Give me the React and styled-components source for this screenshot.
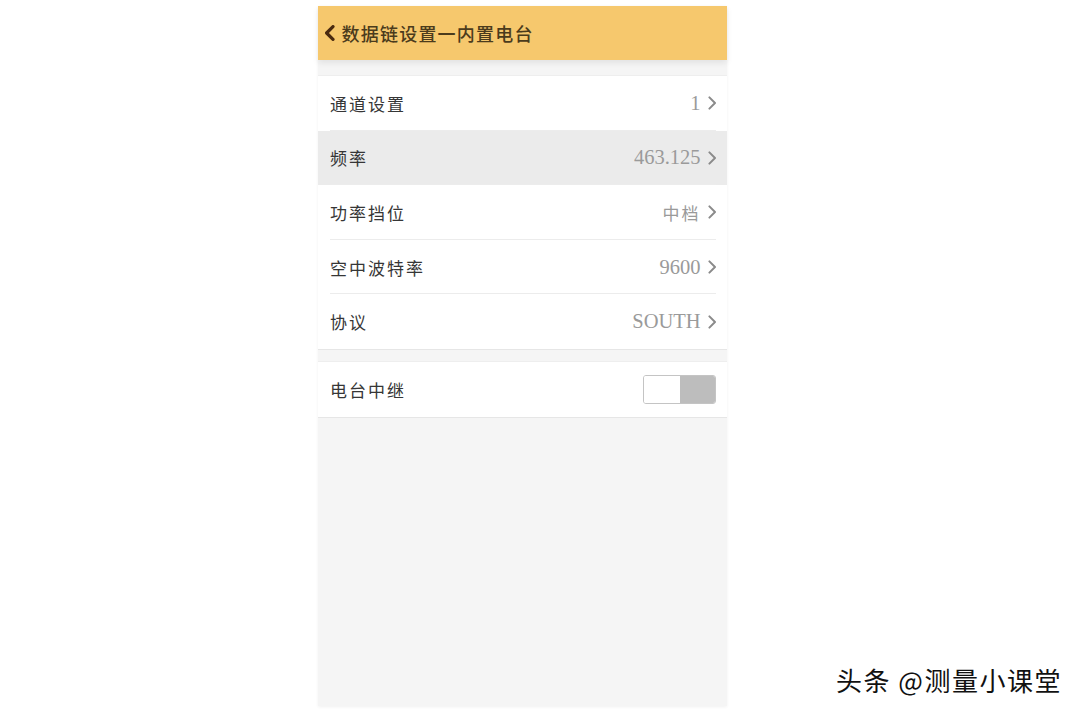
import React from 'react'
import styled, { createGlobalStyle } from 'styled-components'

const Global = createGlobalStyle`
  html, body { margin: 0; padding: 0; background: #fff; }
  body { font-family: "Liberation Serif", "Noto Sans CJK SC", serif; }
`

const Page = styled.div`
  width: 1080px;
  height: 712px;
  display: flex;
  padding: 6px 0 0 318px;
  box-sizing: border-box;
  position: relative;
`

const Phone = styled.div`
  width: 409px;
  height: 700px;
  background: #f5f5f5;
  display: flex;
  flex-direction: column;
  box-shadow: 0 1px 3px rgba(0,0,0,0.06);
`

const Header = styled.div`
  height: 54px;
  background: #f6c86d;
  display: flex;
  align-items: center;
  padding-left: 7px;
  gap: 7px;
  box-shadow: 0 3px 6px rgba(0,0,0,0.08);
`

const Title = styled.div`
  font-family: "Noto Sans CJK SC", sans-serif;
  font-size: 18px;
  font-weight: 500;
  color: #4b3b1c;
  letter-spacing: 1.2px;
`

const Section = styled.div`
  background: #fff;
  margin-top: ${p => p.gap}px;
  border-top: 1px solid #eeeeee;
  border-bottom: 1px solid #e6e6e6;
`

const Row = styled.div`
  height: 54.6px;
  display: flex;
  align-items: center;
  justify-content: space-between;
  padding: 0 11px 0 12px;
  background: ${p => (p.active ? '#ebebeb' : '#fff')};
  position: relative;
  &::after {
    content: '';
    display: ${p => (p.last ? 'none' : 'block')};
    position: absolute;
    left: 12px;
    right: 11px;
    bottom: 0;
    height: 1px;
    background: #ececec;
  }
`

const Label = styled.div`
  font-family: "Noto Sans CJK SC", sans-serif;
  font-size: 17px;
  color: #363636;
  letter-spacing: 2px;
`

const Value = styled.div`
  display: flex;
  align-items: center;
  gap: 7px;
  font-family: "Liberation Serif", "Noto Sans CJK SC", serif;
  font-size: ${p => (p.cjk ? 17 : 20.5)}px;
  letter-spacing: ${p => (p.cjk ? 2 : 0)}px;
  color: #9a9a9a;
`

const Toggle = styled.div`
  width: 71px;
  height: 27px;
  border: 1px solid #c4c4c4;
  border-radius: 3px;
  display: flex;
  overflow: hidden;
`

const Knob = styled.div`
  flex: 1;
  background: ${p => (p.on ? '#bdbdbd' : '#fff')};
`

const Watermark = styled.div`
  position: absolute;
  left: 836px;
  top: 661px;
  font-family: "Noto Sans CJK SC", sans-serif;
  font-size: 26px;
  color: #111;
  text-shadow: 1px 1px 0 #fff, -1px -1px 0 #fff;
  letter-spacing: 1.5px;
`

const Chevron = ({ size = 12, color = '#888', width = 1.6, dir = 'right' }) => (
  <svg width={size * 0.6} height={size} viewBox="0 0 6 10">
    <path
      d={dir === 'right' ? 'M1 1 L5 5 L1 9' : 'M5 1 L1 5 L5 9'}
      fill="none"
      stroke={color}
      strokeWidth={width}
      strokeLinecap="round"
      strokeLinejoin="round"
    />
  </svg>
)

const rows = [
  { label: '通道设置', value: '1' },
  { label: '频率', value: '463.125', active: true },
  { label: '功率挡位', value: '中档', cjk: true },
  { label: '空中波特率', value: '9600' },
  { label: '协议', value: 'SOUTH' },
]

export default function App() {
  return (
    <Page>
      <Global />
      <Phone>
        <Header>
          <Chevron size={16} color="#4a2a10" width={2} dir="left" />
          <Title>数据链设置一内置电台</Title>
        </Header>
        <Section gap={15}>
          {rows.map((r, i) => (
            <Row key={r.label} active={r.active} last={i === rows.length - 1}>
              <Label>{r.label}</Label>
              <Value cjk={r.cjk}>
                {r.value}
                <Chevron size={14} color="#8a8a8a" width={1.4} />
              </Value>
            </Row>
          ))}
        </Section>
        <Section gap={11}>
          <Row last>
            <Label>电台中继</Label>
            <Toggle>
              <Knob />
              <Knob on />
            </Toggle>
          </Row>
        </Section>
      </Phone>
      <Watermark>头条 @测量小课堂</Watermark>
    </Page>
  )
}
